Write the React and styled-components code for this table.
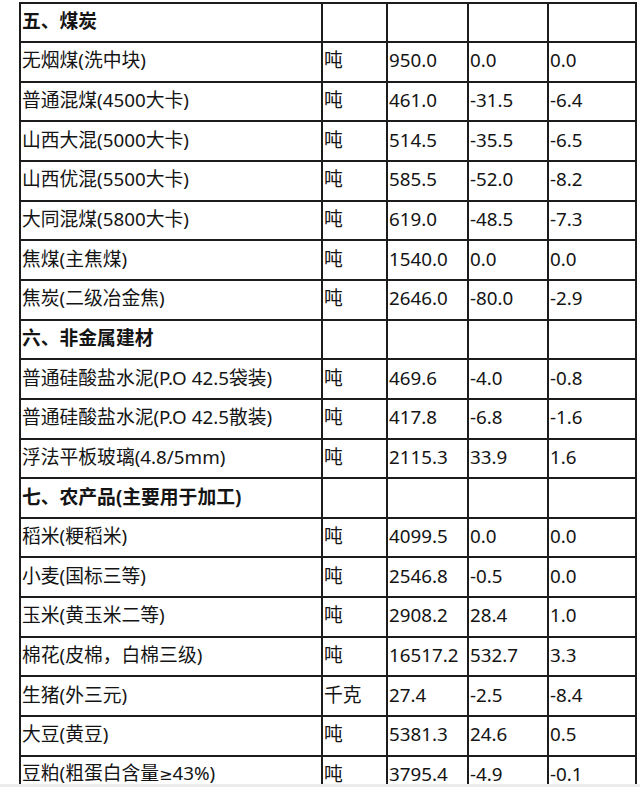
import React from "react";
import styled, { createGlobalStyle } from "styled-components";

const GlobalStyle = createGlobalStyle`
  html, body {
    margin: 0;
    padding: 0;
    background: #ffffff;
  }
  body {
    font-family: "Noto Sans", "Noto Sans CJK SC", sans-serif;
    color: #141414;
  }
`;

const Page = styled.div`
  padding: 1.5px 0 0 19px;
  width: 640px;
  height: 787px;
  overflow: hidden;
  box-sizing: border-box;
  border-bottom: 3px solid #ececec;
`;

const Table = styled.table`
  border-collapse: collapse;
  table-layout: fixed;
  width: 616px;
`;

const Row = styled.tr`
  height: 39.65px;
`;

const Cell = styled.td`
  border: 2px solid #1c1c1c;
  padding: 0 0 3px 1px;
  font-size: 18.8px;
  line-height: 24px;
  font-weight: ${(p) => (p.$bold ? 700 : 400)};
  white-space: nowrap;
  overflow: hidden;
  vertical-align: middle;
`;

const Sym = styled.span`
  font-family: "DejaVu Sans", sans-serif;
  font-size: 16px;
`;

const rows = [
  { head: "五、煤炭" },
  ["无烟煤(洗中块)", "吨", "950.0", "0.0", "0.0"],
  ["普通混煤(4500大卡)", "吨", "461.0", "-31.5", "-6.4"],
  ["山西大混(5000大卡)", "吨", "514.5", "-35.5", "-6.5"],
  ["山西优混(5500大卡)", "吨", "585.5", "-52.0", "-8.2"],
  ["大同混煤(5800大卡)", "吨", "619.0", "-48.5", "-7.3"],
  ["焦煤(主焦煤)", "吨", "1540.0", "0.0", "0.0"],
  ["焦炭(二级冶金焦)", "吨", "2646.0", "-80.0", "-2.9"],
  { head: "六、非金属建材" },
  ["普通硅酸盐水泥(P.O 42.5袋装)", "吨", "469.6", "-4.0", "-0.8"],
  ["普通硅酸盐水泥(P.O 42.5散装)", "吨", "417.8", "-6.8", "-1.6"],
  ["浮法平板玻璃(4.8/5mm)", "吨", "2115.3", "33.9", "1.6"],
  { head: "七、农产品(主要用于加工)" },
  ["稻米(粳稻米)", "吨", "4099.5", "0.0", "0.0"],
  ["小麦(国标三等)", "吨", "2546.8", "-0.5", "0.0"],
  ["玉米(黄玉米二等)", "吨", "2908.2", "28.4", "1.0"],
  ["棉花(皮棉，白棉三级)", "吨", "16517.2", "532.7", "3.3"],
  ["生猪(外三元)", "千克", "27.4", "-2.5", "-8.4"],
  ["大豆(黄豆)", "吨", "5381.3", "24.6", "0.5"],
  [
    <>
      豆粕(粗蛋白含量<Sym>≥</Sym>43%)
    </>,
    "吨",
    "3795.4",
    "-4.9",
    "-0.1",
  ],
];

export default function App() {
  return (
    <>
      <GlobalStyle />
      <Page>
        <Table>
          <colgroup>
            <col style={{ width: 302 }} />
            <col style={{ width: 65 }} />
            <col style={{ width: 81 }} />
            <col style={{ width: 80 }} />
            <col style={{ width: 88 }} />
          </colgroup>
          <tbody>
            {rows.map((r, i) =>
              r.head ? (
                <Row key={i}>
                  <Cell $bold>{r.head}</Cell>
                  <Cell />
                  <Cell />
                  <Cell />
                  <Cell />
                </Row>
              ) : (
                <Row key={i}>
                  {r.map((v, j) => (
                    <Cell key={j}>{v}</Cell>
                  ))}
                </Row>
              )
            )}
          </tbody>
        </Table>
      </Page>
    </>
  );
}
